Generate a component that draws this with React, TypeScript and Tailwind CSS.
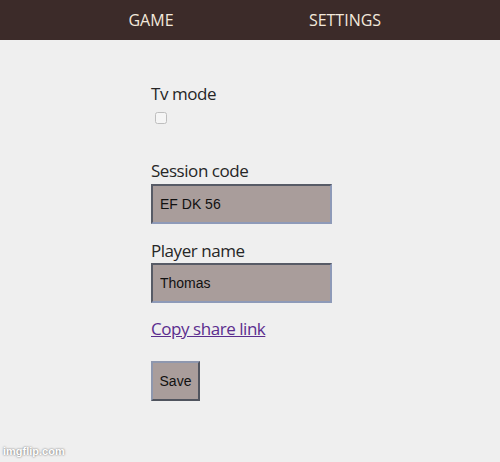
import React, { useState } from 'react';

export default function App() {
  const [tvMode, setTvMode] = useState(false);
  const [code, setCode] = useState('EF DK 56');
  const [name, setName] = useState('Thomas');

  return (
    <div className="relative min-h-[462px] w-full bg-[#efefef] font-['Open_Sans',sans-serif]">
      <header className="flex h-[40px] items-center justify-center bg-[#3c2b29]">
        <nav className="mr-[4px] flex w-[388px] text-[16px] text-[#f3e9dc]">
          <a className="flex-1 text-center">GAME</a>
          <a className="flex-1 text-center">SETTINGS</a>
        </nav>
      </header>

      <main className="ml-[151px] flex flex-col items-start pt-[42px] text-[17px] leading-[24px] tracking-[-0.45px] text-[#262626]">
        <label>Tv mode</label>
        <input
          type="checkbox"
          checked={tvMode}
          onChange={(e) => setTvMode(e.target.checked)}
          className="ml-[4px] mt-[6px] h-[12px] w-[12px] opacity-40"
        />

        <label className="mt-[35px]">Session code</label>
        <input
          value={code}
          onChange={(e) => setCode(e.target.value)}
          className="mt-[1px] h-[40px] w-[181px] border-2 border-t-[#575b66] border-l-[#575b66] border-b-[#8e9ab8] border-r-[#8e9ab8] bg-[#a99d9b] px-[7px] font-['Liberation_Sans',sans-serif] text-[14px] tracking-normal text-[#111] outline-none"
        />

        <label className="mt-[15px]">Player name</label>
        <input
          value={name}
          onChange={(e) => setName(e.target.value)}
          className="h-[40px] w-[181px] border-2 border-t-[#575b66] border-l-[#575b66] border-b-[#8e9ab8] border-r-[#8e9ab8] bg-[#a99d9b] px-[7px] font-['Liberation_Sans',sans-serif] text-[14px] tracking-normal text-[#111] outline-none"
        />

        <a href="#" className="mt-[14px] text-[#5b2d8e] underline">Copy share link</a>

        <button className="mt-[20px] h-[40px] w-[49px] border-2 border-t-[#8e97ae] border-l-[#8e97ae] border-b-[#50545e] border-r-[#50545e] bg-[#a99d9b] font-['Liberation_Sans',sans-serif] text-[14px] tracking-normal text-[#111]">
          Save
        </button>
      </main>

      <span className="absolute bottom-[3px] left-[3px] font-['Liberation_Sans',sans-serif] text-[11px] font-bold text-white [text-shadow:0_0_2px_#555]">
        imgflip.com
      </span>
    </div>
  );
}
